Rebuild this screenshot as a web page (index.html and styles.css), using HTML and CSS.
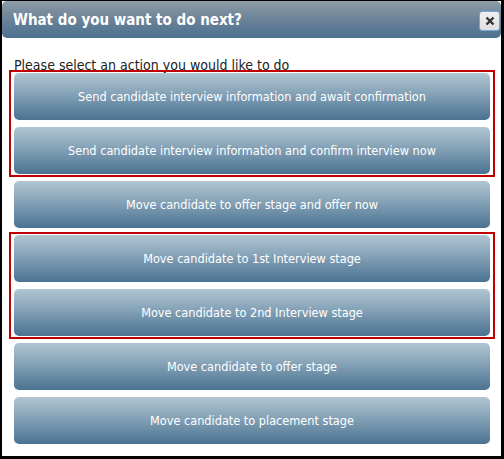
FILE: index.html
```html
<!DOCTYPE html>
<html>
<head>
<meta charset="utf-8">
<link rel="stylesheet" href="styles.css">
</head>
<body>
<div class="dialog">
  <div class="titlebar">
    <span class="title">What do you want to do next?</span>
    <button class="close" aria-label="Close">
      <svg width="10" height="10" viewBox="0 0 10 10"><path d="M1.5 1.5 L8.5 8.5 M8.5 1.5 L1.5 8.5" stroke="#333" stroke-width="2.4" stroke-linecap="butt"/></svg>
    </button>
  </div>
  <div class="content">
    <div class="prompt">Please select an action you would like to do</div>
    <div class="actions">
      <div class="group">
        <button class="action">Send candidate interview information and await confirmation</button>
        <button class="action">Send candidate interview information and confirm interview now</button>
      </div>
      <button class="action">Move candidate to offer stage and offer now</button>
      <div class="group">
        <button class="action">Move candidate to 1st Interview stage</button>
        <button class="action">Move candidate to 2nd Interview stage</button>
      </div>
      <button class="action">Move candidate to offer stage</button>
      <button class="action">Move candidate to placement stage</button>
    </div>
  </div>
</div>
</body>
</html>
```

FILE: styles.css
```css
html, body {
  margin: 0;
  padding: 0;
  background: #000;
}
.dialog {
  width: 499px;
  height: 455px;
  background: #fff;
  border-style: solid;
  border-color: #000;
  border-width: 1px 3px 3px 2px;
  font-family: "DejaVu Sans Condensed", "DejaVu Sans", sans-serif;
}
.titlebar {
  height: 37px;
  display: flex;
  align-items: center;
  justify-content: space-between;
  padding: 0 1px 0 11px;
  border-radius: 5px;
  background: linear-gradient(to bottom, #8d9ca7 0%, #6b8298 50%, #4a7190 100%);
}
.title {
  color: #fff;
  font-weight: bold;
  font-size: 15px;
  font-family: "DejaVu Sans Condensed", "DejaVu Sans", sans-serif;
}
.close {
  width: 21px;
  height: 20px;
  margin-top: 3px;
  padding: 0;
  display: flex;
  align-items: center;
  justify-content: center;
  background: linear-gradient(to bottom, #f0f0f0, #e0e0e0);
  border: 1px solid #7aa3d6;
  border-radius: 3px;
}
.content {
  padding: 19px 11px 12px 12px;
}
.prompt {
  font-size: 14px;
  line-height: 16px;
  color: #222;
}
.actions {
  display: flex;
  flex-direction: column;
  gap: 7px;
}
.group {
  display: flex;
  flex-direction: column;
  gap: 7px;
  border: 2px solid #c00000;
  padding: 1px 3px;
  margin: -3px -5px;
}
.action {
  height: 47px;
  width: 100%;
  border: none;
  border-radius: 5px;
  background: linear-gradient(to bottom, #b1c5d2 0%, #7f9db3 50%, #4a7291 100%);
  color: #fff;
  font-family: "DejaVu Sans Condensed", "DejaVu Sans", sans-serif;
  font-size: 12.6px;
  text-align: center;
  padding: 0;
}
```
